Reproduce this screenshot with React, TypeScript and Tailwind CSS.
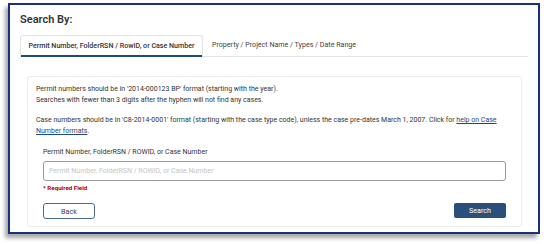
export default function App() {
  return (
    <div className="w-[544px] h-[244px] bg-white pt-[3px] pl-[8px] font-['Roboto',sans-serif] text-[#333]">
      <div className="w-[532px] h-[231px] border-2 border-[#1c2f7c] bg-white shadow-[-3px_4px_4px_rgba(0,0,0,0.35)] px-[10px] pt-[8px]">
        <h2 className="text-[11px] leading-[14px] font-semibold text-[#333]">Search By:</h2>

        <div className="mt-[8px] flex items-end border-b border-[#e3e3e3] h-[22px]">
          <div className="h-[22px] w-[183px] flex items-center justify-center border border-b-0 border-[#e3e3e3] rounded-t-[3px] relative -mb-px bg-white">
            <span className="text-[7.1px] font-medium text-[#333]">Permit Number, FolderRSN / RowID, or Case Number</span>
            <div className="absolute left-0 right-0 bottom-0 h-[2px] bg-[#1f4a78]" />
          </div>
          <div className="h-[22px] flex items-center pl-[9px]">
            <span className="text-[7.1px] text-[#444]">Property / Project Name / Types / Date Range</span>
          </div>
        </div>

        <div className="mt-[19px] ml-[7px] mr-[6px] h-[151px] border border-[#ececec] rounded-[3px] px-[8px] pt-[7px] text-[7px] leading-[11px] text-[#333]">
          <p>Permit numbers should be in '2014-000123 BP' format (starting with the year).</p>
          <p>Searches with fewer than 3 digits after the hyphen will not find any cases.</p>
          <p className="mt-[9px]">
            Case numbers should be in 'C8-2014-0001' format (starting with the case type code), unless the case pre-dates March 1, 2007. Click for{" "}
            <a className="text-[#1f4a78] underline">help on Case Number formats</a>.
          </p>

          <div className="px-[7px] mt-[10px]">
            <label className="block text-[7px] leading-[11px]">Permit Number, FolderRSN / ROWID, or Case Number</label>
            <input
              className="mt-[3px] w-full h-[20px] border border-[#9a9a9a] rounded-[3px] px-[5px] text-[7px] placeholder:text-[#c4c4c4] outline-none"
              placeholder="Permit Number, FolderRSN / ROWID, or Case Number"
            />
            <div className="mt-[2px] text-[6.2px] leading-[10px] font-bold text-[#b30000]">* Required Field</div>
            <div className="mt-[10px] flex justify-between">
              <button className="w-[52px] h-[16px] border border-[#4a6a8f] rounded-[3px] bg-white text-[7.2px] text-[#444]">Back</button>
              <button className="w-[52px] h-[15px] rounded-[2px] bg-[#2b4f7b] text-[7.2px] text-white">Search</button>
            </div>
          </div>
        </div>
      </div>
    </div>
  );
}
